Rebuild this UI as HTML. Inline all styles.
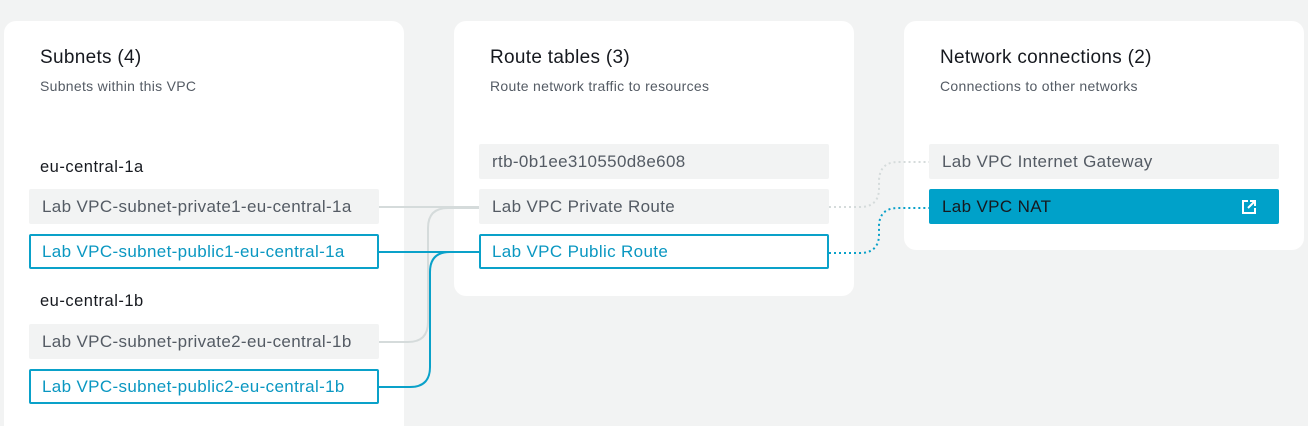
<!DOCTYPE html>
<html style="height:426px;overflow:hidden"><head><style>
body{margin:0;width:1308px;height:426px;background:#f2f3f3;position:relative;overflow:hidden;font-family:"Liberation Sans",sans-serif;}
.card{position:absolute;background:#fff;border-radius:12px;}
.t{position:absolute;font-size:19px;letter-spacing:0.3px;color:#16191f;}
.s{position:absolute;font-size:14px;letter-spacing:0.3px;color:#545b64;}
.az{position:absolute;font-size:16.5px;letter-spacing:0.5px;color:#16191f;}
.row{position:absolute;box-sizing:border-box;width:350px;height:35px;border-radius:2px;font-size:17px;letter-spacing:0.35px;line-height:35px;padding-left:13px;background:#f2f3f3;color:#545b64;white-space:nowrap;}
.row.b{background:#fff;border:2px solid #0aa1c9;color:#0a97c1;line-height:31px;padding-left:11px;}
.row.n{background:#00a1c9;color:#16191f;}
svg{position:absolute;left:0;top:0;}
</style></head><body>
<div class="card" style="left:4px;top:21px;width:400px;height:420px"></div>
<div class="card" style="left:454px;top:21px;width:400px;height:275px"></div>
<div class="card" style="left:904px;top:21px;width:400px;height:229px"></div>
<svg width="1308" height="426">
<path d="M379 207 H479 M379 342 H408 Q428 342 428 322 V228 Q428 208 448 208 H479" fill="none" stroke="#d5dbdb" stroke-width="2"/>
<path d="M379 252 H479 M379 387 H410 Q430 387 430 367 V272 Q430 252 450 252 H479" fill="none" stroke="#0aa1c9" stroke-width="2"/>
<path d="M829 207 H860 Q878 207 879 190 V180 Q880 162 898 162 H929" fill="none" stroke="#d5dbdb" stroke-width="2" stroke-dasharray="2 3"/>
<path d="M829 253 H860 Q878 253 879 236 V225 Q880 208 898 208 H929" fill="none" stroke="#0aa1c9" stroke-width="2" stroke-dasharray="2 3"/>
</svg>
<div class="t" style="left:40px;top:47px">Subnets (4)</div>
<div class="s" style="left:40px;top:78px">Subnets within this VPC</div>
<div class="az" style="left:40px;top:158px">eu-central-1a</div>
<div class="row" style="left:29px;top:189px">Lab VPC-subnet-private1-eu-central-1a</div>
<div class="row b" style="left:29px;top:234px">Lab VPC-subnet-public1-eu-central-1a</div>
<div class="az" style="left:40px;top:292px">eu-central-1b</div>
<div class="row" style="left:29px;top:324px">Lab VPC-subnet-private2-eu-central-1b</div>
<div class="row b" style="left:29px;top:369px">Lab VPC-subnet-public2-eu-central-1b</div>
<div class="t" style="left:490px;top:47px">Route tables (3)</div>
<div class="s" style="left:490px;top:78px">Route network traffic to resources</div>
<div class="row" style="left:479px;top:144px">rtb-0b1ee310550d8e608</div>
<div class="row" style="left:479px;top:189px">Lab VPC Private Route</div>
<div class="row b" style="left:479px;top:234px">Lab VPC Public Route</div>
<div class="t" style="left:940px;top:47px">Network connections (2)</div>
<div class="s" style="left:940px;top:78px">Connections to other networks</div>
<div class="row" style="left:929px;top:144px">Lab VPC Internet Gateway</div>
<div class="row n" style="left:929px;top:189px">Lab VPC NAT
<svg style="left:312px;top:10px" width="16" height="16" viewBox="0 0 16 16"><path d="M7 2H2v12h12V9M9 2h5v5M14 2L7 9" fill="none" stroke="#fff" stroke-width="2"/></svg></div>
</body></html>
